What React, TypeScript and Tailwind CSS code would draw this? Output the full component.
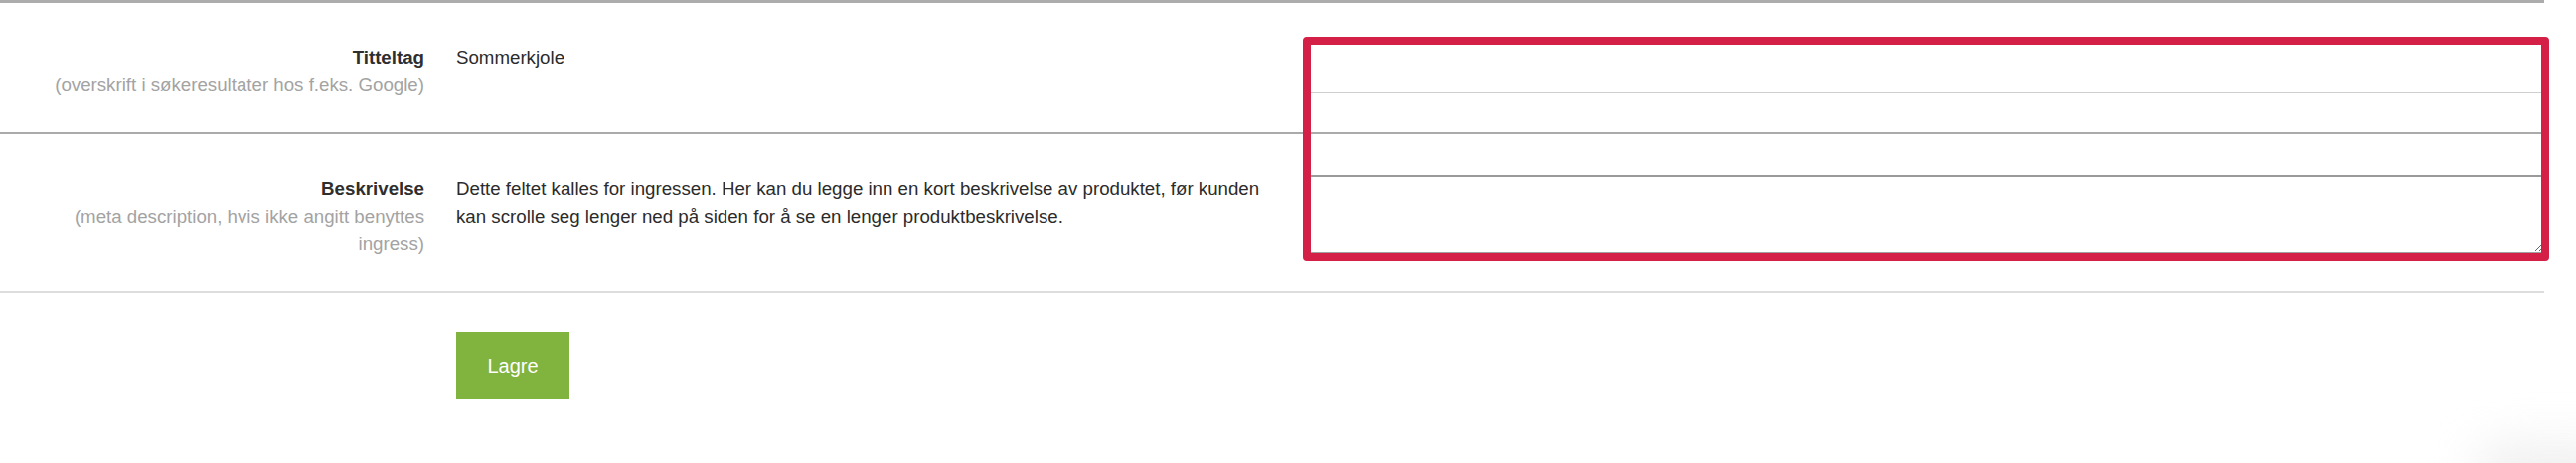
import React from 'react';

const rows = [
  {
    label: 'Titteltag',
    hint: '(overskrift i søkeresultater hos f.eks. Google)',
    value: 'Sommerkjole',
    kind: 'input',
  },
  {
    label: 'Beskrivelse',
    hint: '(meta description, hvis ikke angitt benyttes ingress)',
    value:
      'Dette feltet kalles for ingressen. Her kan du legge inn en kort beskrivelse av produktet, før kunden kan scrolle seg lenger ned på siden for å se en lenger produktbeskrivelse.',
    kind: 'textarea',
  },
];

const App: React.FC = () => {
  return (
    <div className="relative w-[2592px] h-[466px] overflow-hidden bg-white font-['Liberation_Sans','Helvetica_Neue',Arial,sans-serif] text-[18.7px] leading-[28px] text-[#333]">
      <div className="w-[2560px] border-t-[3px] border-[#acacac]">
        {rows.map((row, i) => (
          <div
            key={row.label}
            className={`grid grid-cols-[427px_820px_1fr] gap-x-8 pt-[39px] pb-[33px] border-b-2 ${
              i === 0 ? 'border-[#aaaaaa]' : 'border-[#dddddd]'
            }`}
          >
            <div className="text-right pt-[2px]">
              <div className="font-bold text-[#2e2e2e]">{row.label}</div>
              <div className="text-[#a3a3a3] pl-[50px]">{row.hint}</div>
            </div>
            <div className="text-[#2b2b2b] pt-[2px]">{row.value}</div>
            <div>
              {row.kind === 'input' ? (
                <input
                  type="text"
                  className="block w-full h-[52px] border border-[#cfcfcf] bg-white px-3 outline-none"
                />
              ) : (
                <textarea className="block w-full h-[79px] mt-[2px] border border-[#a0a0a0] border-t-2 border-t-[#9a9a9a] bg-white px-3 outline-none" />
              )}
            </div>
          </div>
        ))}

        <div className="grid grid-cols-[427px_1fr] gap-x-8 pt-[39px]">
          <div />
          <div>
            <button
              type="button"
              className="w-[114px] h-[68px] bg-[#81b33f] text-white text-[20px]"
            >
              Lagre
            </button>
          </div>
        </div>
      </div>

      {/* highlight overlay */}
      <div className="absolute left-[1311px] top-[37px] w-[1254px] h-[226px] border-[8px] border-[#d41f47] rounded-[4px] pointer-events-none" />

      {/* faint floating shadow bottom right */}
      <div className="absolute left-[2490px] top-[448px] w-[160px] h-[60px] rounded-full bg-[#e4e4e4] blur-xl opacity-60" />
    </div>
  );
};

export default App;
